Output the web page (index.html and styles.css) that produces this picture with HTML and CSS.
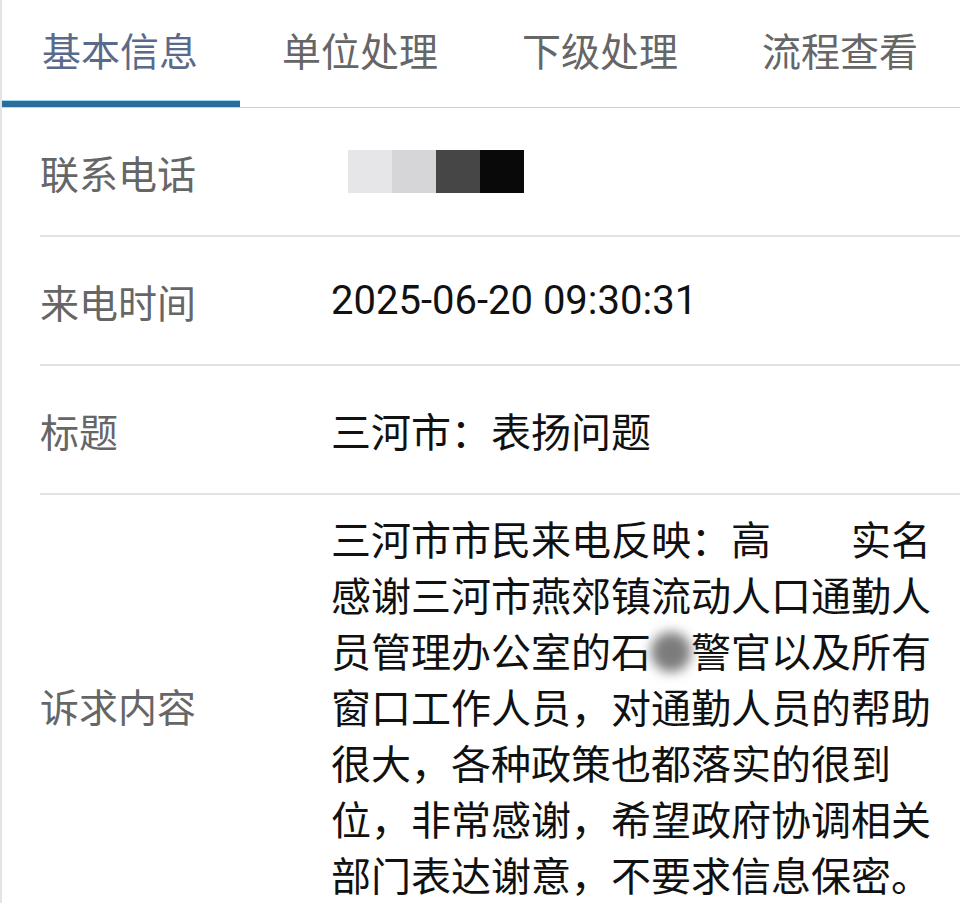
FILE: index.html
```html
<!DOCTYPE html>
<html lang="zh-CN">

<head>
    <meta charset="UTF-8">
    <title>工单详情</title>
    <link rel="stylesheet" href="styles.css">
</head>

<body>
    <div class="page">
        <div class="tabs">
            <div class="tab active">基本信息</div>
            <div class="tab">单位处理</div>
            <div class="tab">下级处理</div>
            <div class="tab">流程查看</div>
        </div>

        <div class="row">
            <div class="label">联系电话</div>
            <div class="value">
                <div class="mosaic">
                    <span class="px px-1"></span>
                    <span class="px px-2"></span>
                    <span class="px px-3"></span>
                    <span class="px px-4"></span>
                </div>
            </div>
        </div>

        <div class="row">
            <div class="label">来电时间</div>
            <div class="value">2025-06-20 09:30:31</div>
        </div>

        <div class="row">
            <div class="label">标题</div>
            <div class="value">三河市：表扬问题</div>
        </div>

        <div class="row row-long">
            <div class="label">诉求内容</div>
            <div class="value content">三河市市民来电反映：高<span class="hidden-name"></span>实名感谢三河市燕郊镇流动人口通勤人员管理办公室的石<span class="blur-name"></span>警官以及所有窗口工作人员，对通勤人员的帮助很大，各种政策也都落实的很到位，非常感谢，希望政府协调相关部门表达谢意，不要求信息保密。</div>
        </div>
    </div>
</body>

</html>
```

FILE: styles.css
```css
body {
    margin: 0;
    background: #fff;
    font-family: Roboto, "Noto Sans CJK SC", sans-serif;
}

.page {
    border-left: 2px solid #e4e4e4;
    min-height: 903px;
    overflow: hidden;
}

/* tabs */
.tabs {
    display: grid;
    grid-template-columns: repeat(4, 1fr);
    height: 107px;
    border-bottom: 1px solid #cfcfcf;
    margin-left: -2px;
}

.tab {
    display: flex;
    align-items: center;
    justify-content: center;
    padding-bottom: 9px;
    font-size: 39px;
    color: #666;
}

.tab.active {
    color: #5a6a8a;
    box-shadow: inset 0 -6px 0 #2a6d9c, inset 0 -7px 0 #9fd6ec;
}

/* rows */
.row {
    display: grid;
    grid-template-columns: 291px 1fr;
    align-items: center;
    height: 127px;
    margin-left: 38px;
    border-bottom: 2px solid #e2e2e2;
}

.label {
    font-size: 39px;
    color: #666;
}

.value {
    font-size: 40px;
    color: #111;
}

.mosaic {
    display: flex;
    margin-left: 17px;
}

.px {
    width: 44px;
    height: 43px;
}

.px-1 { background: #e6e6e9; }
.px-2 { background: #d6d6d9; }
.px-3 { background: #464646; }
.px-4 { background: #090909; }

.row-long {
    height: auto;
    border-bottom: none;
    padding: 19px 0 9px;
}

.row-long .label {
    padding-bottom: 10px;
}

.content {
    line-height: 56px;
    max-width: 610px;
}

.hidden-name {
    display: inline-block;
    width: 2em;
    height: 1em;
}

.blur-name {
    display: inline-block;
    width: 1em;
    height: 1em;
    vertical-align: -0.12em;
    border-radius: 50%;
    background: #7c7c7c;
    filter: blur(6px);
}
```
